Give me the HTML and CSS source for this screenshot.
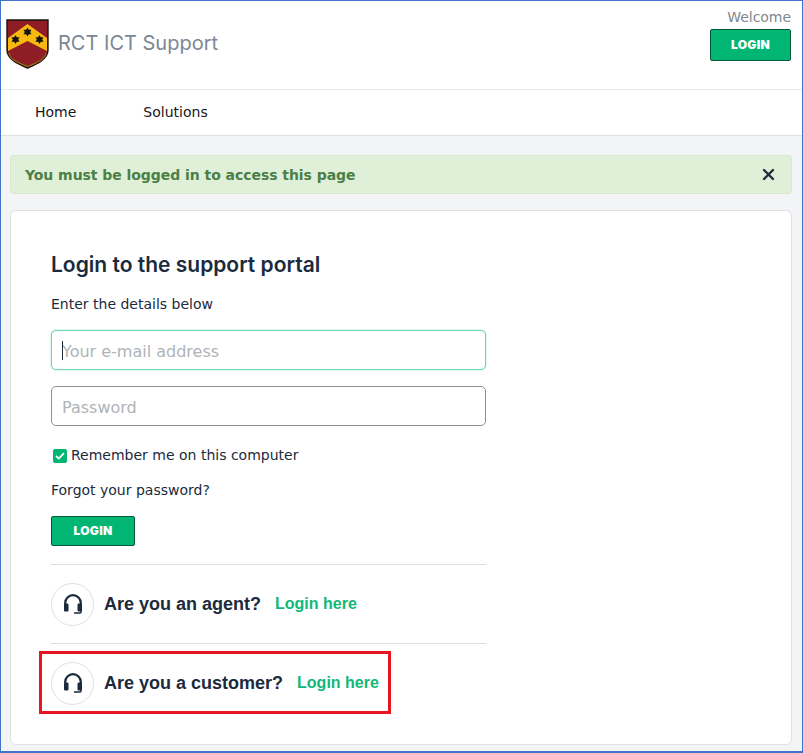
FILE: index.html
```html
<!DOCTYPE html>
<html lang="en">
<head>
<meta charset="utf-8">
<title>RCT ICT Support</title>
<link rel="stylesheet" href="styles.css">
</head>
<body>
<div class="frame">
  <header class="header">
    <div class="brand">
      <svg class="crest" width="43" height="50" viewBox="0 0 43 50">
        <path d="M1 1H42V31C42 40 31 45 21.500 49C12 45 1 40 1 31Z" fill="#8f1d26" stroke="#17130a" stroke-width="1.400"/>
        <path d="M2 19L21.500 5L41 19V32L21.500 22L2 32Z" fill="#f7b90f"/>
        <path d="M3 34C4 41 13 44 21.500 47.500C30 44 39 41 40 34" fill="none" stroke="#9a6a18" stroke-width="1.200"/>
        <g fill="#15130f">
          <path d="M9.500 16L10.800 18.200L13.500 18.200L12.200 20.500L13.500 22.800L10.800 22.800L9.500 25L8.200 22.800L5.500 22.800L6.800 20.500L5.500 18.200L8.200 18.200Z"/>
          <path d="M21.500 8.500L22.800 10.700L25.500 10.700L24.200 13L25.500 15.300L22.800 15.300L21.500 17.500L20.200 15.300L17.500 15.300L18.800 13L17.500 10.700L20.200 10.700Z"/>
          <path d="M33.500 16L34.800 18.200L37.500 18.200L36.200 20.500L37.500 22.800L34.800 22.800L33.500 25L32.200 22.800L29.500 22.800L30.800 20.500L29.500 18.200L32.200 18.200Z"/>
        </g>
      </svg>
      <span class="brand-name">RCT ICT Support</span>
    </div>
    <div class="account">
      <span class="welcome">Welcome</span>
      <a class="btn btn-top">LOGIN</a>
    </div>
  </header>
  <nav class="nav">
    <a class="nav-item">Home</a>
    <a class="nav-item">Solutions</a>
  </nav>
  <main class="content">
    <div class="alert">
      <span>You must be logged in to access this page</span>
      <svg class="close" width="13" height="13" viewBox="0 0 13 13"><path d="M2 2L11 11M11 2L2 11" stroke="#1f2d3d" stroke-width="2.400" stroke-linecap="round"/></svg>
    </div>
    <section class="card">
      <div class="form">
        <h1 class="title">Login to the support portal</h1>
        <p class="lead">Enter the details below</p>
        <div class="field field-focus"><span class="caret"></span><input class="input" placeholder="Your e-mail address"></div>
        <div class="field"><input class="input" placeholder="Password"></div>
        <label class="remember">
          <span class="check"><svg width="10" height="8" viewBox="0 0 10 8"><path d="M1 4L3.800 6.600L9 1.200" fill="none" stroke="#fff" stroke-width="1.800"/></svg></span>
          Remember me on this computer
        </label>
        <p class="forgot">Forgot your password?</p>
        <a class="btn btn-main">LOGIN</a>
        <div class="row row-first">
          <span class="round"><svg width="18" height="20" viewBox="0 0 18 20"><path d="M1.200 12V9a7.800 7.800 0 0 1 15.600 0v3" fill="none" stroke="#1b2a3d" stroke-width="2.200"/><rect x="0" y="9.500" width="4.500" height="8" rx="1.200" fill="#1b2a3d"/><rect x="13.500" y="9.500" width="4.500" height="8" rx="1.200" fill="#1b2a3d"/><path d="M17 17v1a1 1 0 0 1-1 1h-6" fill="none" stroke="#1b2a3d" stroke-width="1.500"/></svg></span>
          <span class="question">Are you an agent?</span>
          <a class="link">Login here</a>
        </div>
        <div class="row">
          <span class="round"><svg width="18" height="20" viewBox="0 0 18 20"><path d="M1.200 12V9a7.800 7.800 0 0 1 15.600 0v3" fill="none" stroke="#1b2a3d" stroke-width="2.200"/><rect x="0" y="9.500" width="4.500" height="8" rx="1.200" fill="#1b2a3d"/><rect x="13.500" y="9.500" width="4.500" height="8" rx="1.200" fill="#1b2a3d"/><path d="M17 17v1a1 1 0 0 1-1 1h-6" fill="none" stroke="#1b2a3d" stroke-width="1.500"/></svg></span>
          <span class="question">Are you a customer?</span>
          <a class="link">Login here</a>
        </div>
      </div>
    </section>
  </main>
  <div class="highlight"></div>
</div>
</body>
</html>
```
FILE: styles.css
```css
* { box-sizing: border-box; }
html, body { margin: 0; height: 100%; }
body { font-family: "DejaVu Sans", sans-serif; color: #1b2a3d; font-size: 14px; }
.frame { position: relative; height: 753px; border: 1px solid #3f74c9; border-bottom-width: 2px; background: #f3f4f6; overflow: hidden; }
.header { height: 89px; background: #fff; border-bottom: 1px solid #e8eaed; display: flex; justify-content: space-between; padding: 8px 11px 0 5px; }
.brand { display: flex; align-items: flex-start; padding-top: 10px; }
.crest { display: block; margin-right: 9px; }
.brand-name { font-family: "Inter", sans-serif; font-size: 20px; font-weight: 400; color: #7b8794; line-height: 30px; margin-top: 9px; }
.account { display: flex; flex-direction: column; align-items: flex-end; }
.welcome { font-size: 14px; letter-spacing: -0.05px; color: #7f8790; line-height: 17px; margin-bottom: 3px; }
.btn { display: flex; align-items: center; justify-content: center; padding-bottom: 1px; background: #00b672; color: #fff; font-family: "Inter", sans-serif; font-size: 12px; font-weight: 900; letter-spacing: 0.3px; border: 1px solid #07583a; border-radius: 2px; }
.btn-top { width: 81px; height: 32px; }
.nav { height: 46px; background: #fff; border-bottom: 1px solid #dfe1e5; display: flex; align-items: center; padding: 0 0 2px 34px; gap: 67px; }
.nav-item { color: #15171a; font-size: 14px; }
.content { padding: 19px 10px 0 9px; }
.alert { height: 39px; background: #dfefd8; border: 1px solid #d6e9cc; border-radius: 4px; display: flex; align-items: center; justify-content: space-between; padding: 0 16px 0 14px; font-size: 14px; letter-spacing: -0.05px; font-weight: 700; color: #4b7f45; }
.close { display: block; }
.card { margin-top: 16px; height: 535px; background: #fff; border: 1px solid #dfe2e7; border-radius: 6px; padding: 41px 0 0 40px; }
.form { width: 435px; }
.title { margin: 0; font-family: "Inter", sans-serif; font-size: 21px; font-weight: 600; line-height: 26px; color: #1b2a3d; }
.lead { margin: 18px 0 0; font-size: 14px; line-height: 17px; }
.field { position: relative; height: 40px; border: 1px solid #8d9196; border-radius: 5px; margin-bottom: 16px; background: #fff; }
.field-focus { margin-top: 17px; border-color: #6fd8ad; box-shadow: 0 0 2px #8fe0bf; }
.caret { position: absolute; left: 10px; top: 10px; width: 1px; height: 19px; background: #1b2a3d; }
.input { display: block; width: 100%; height: 100%; border: 0; background: transparent; padding: 2px 10px 0; font-family: "DejaVu Sans", sans-serif; font-size: 16px; outline: none; }
.input::placeholder { color: #b0b3b7; opacity: 1; }
.remember { display: flex; align-items: center; margin: 21px 0 0 2px; line-height: 17px; color: #1b2a3d; }
.check { display: flex; align-items: center; justify-content: center; width: 14px; height: 14px; background: #00b672; border-radius: 2px; margin-right: 4px; }
.forgot { margin: 18px 0 0; line-height: 17px; color: #1b2a3d; }
.btn-main { margin-top: 17px; width: 84px; height: 30px; }
.row { height: 79px; border-top: 1px solid #dcdde0; display: flex; align-items: center; font-family: "Liberation Sans", sans-serif; font-weight: 700; }
.row-first { margin-top: 18px; }
.round { width: 43px; height: 43px; border: 1px solid #dedfe2; border-radius: 50%; display: flex; align-items: center; justify-content: center; margin-right: 10px; }
.question { font-size: 18px; color: #1b2a3d; margin-right: 14px; }
.link { font-size: 16px; color: #10b878; }
.highlight { position: absolute; left: 38px; top: 650px; width: 352px; height: 63px; border: 3px solid #e8141f; }
```
